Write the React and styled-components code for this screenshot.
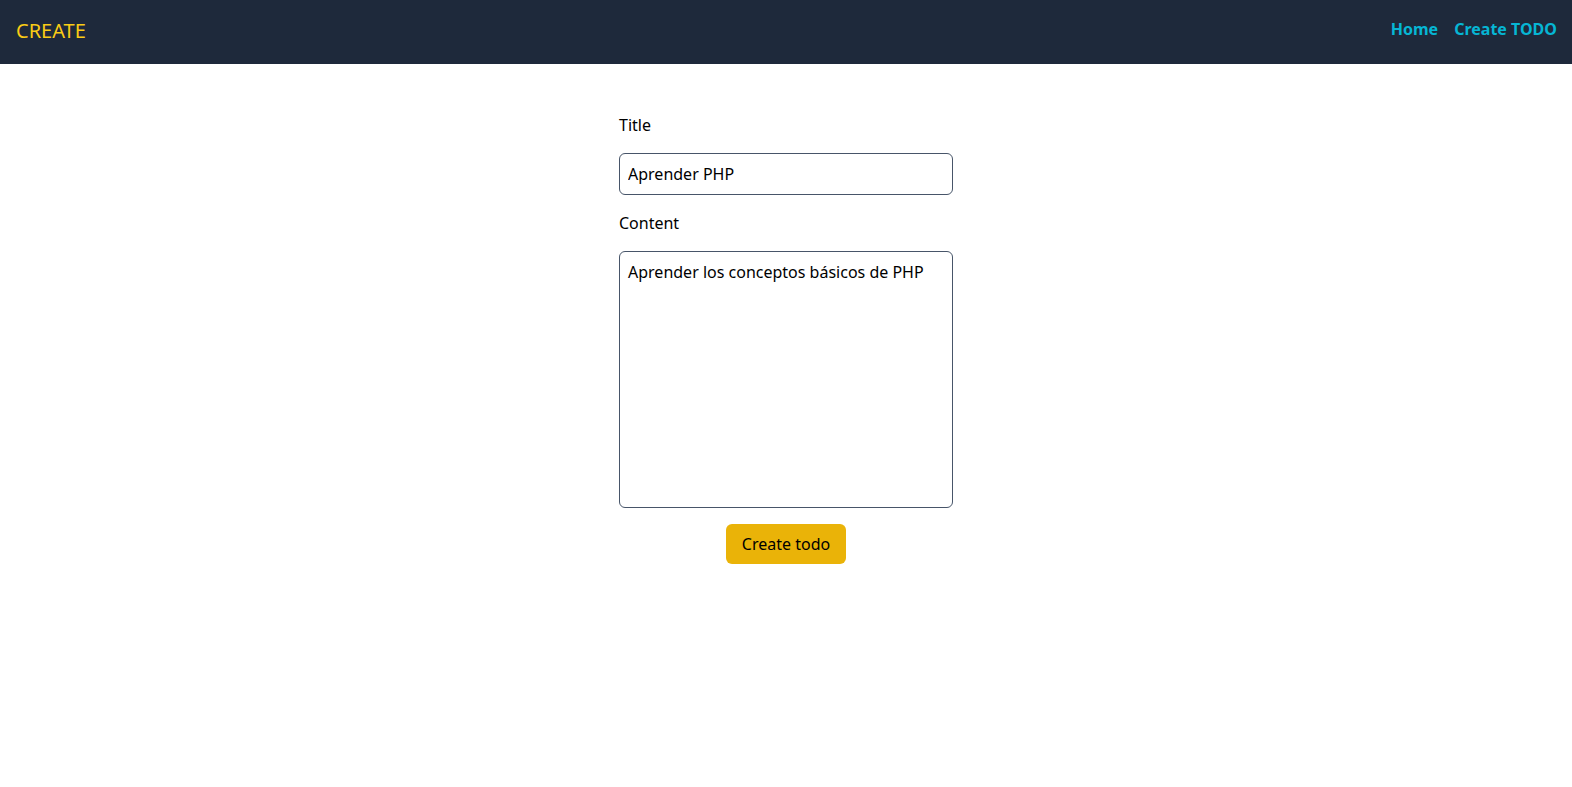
import React from "react";
import styled, { createGlobalStyle } from "styled-components";

const Global = createGlobalStyle`
  * { box-sizing: border-box; }
  body { margin: 0; font-family: "Noto Sans", "Open Sans", sans-serif; background: #fff; color: #000; }
`;

const Header = styled.header`
  height: 64px;
  background: #1e293b;
  display: flex;
  align-items: center;
  justify-content: space-between;
  padding: 0 15px 6px 16px;
`;

const Brand = styled.h1`
  margin: 0;
  font-size: 20px;
  font-weight: 400;
  line-height: 28px;
  color: #facc15;
  padding-top: 4px;
`;

const Nav = styled.nav`
  display: flex;
  gap: 16px;
`;

const NavLink = styled.a`
  color: #06b6d4;
  font-weight: 700;
  font-size: 16px;
  line-height: 24px;
  text-decoration: none;
`;

const Form = styled.form`
  width: 334px;
  margin: 49px auto 0;
  display: flex;
  flex-direction: column;
  gap: 16px;
`;

const Label = styled.label`
  font-size: 16px;
  line-height: 24px;
`;

const fieldBase = `
  width: 100%;
  border: 1px solid #475569;
  border-radius: 6px;
  padding: 8px;
  font-family: "Noto Sans", "Open Sans", sans-serif;
  font-size: 16px;
  line-height: 24px;
  color: #000;
  background: #fff;
  outline: none;
`;

const Input = styled.input`
  ${fieldBase}
  display: block;
  height: 42px;
`;

const TextArea = styled.textarea`
  ${fieldBase}
  display: block;
  height: 257px;
  resize: none;
`;

const Button = styled.button`
  align-self: center;
  background: #eab308;
  border: none;
  border-radius: 6px;
  padding: 8px 16px;
  font-family: "Noto Sans", "Open Sans", sans-serif;
  font-size: 16px;
  line-height: 24px;
  color: #000;
  white-space: nowrap;
  cursor: pointer;
`;

export default function App() {
  return (
    <>
      <Global />
      <Header>
        <Brand>CREATE</Brand>
        <Nav>
          <NavLink href="#">Home</NavLink>
          <NavLink href="#">Create TODO</NavLink>
        </Nav>
      </Header>
      <Form onSubmit={(e) => e.preventDefault()}>
        <Label htmlFor="title">Title</Label>
        <Input id="title" defaultValue="Aprender PHP" />
        <Label htmlFor="content">Content</Label>
        <TextArea id="content" defaultValue="Aprender los conceptos básicos de PHP" />
        <Button type="submit">Create todo</Button>
      </Form>
    </>
  );
}
